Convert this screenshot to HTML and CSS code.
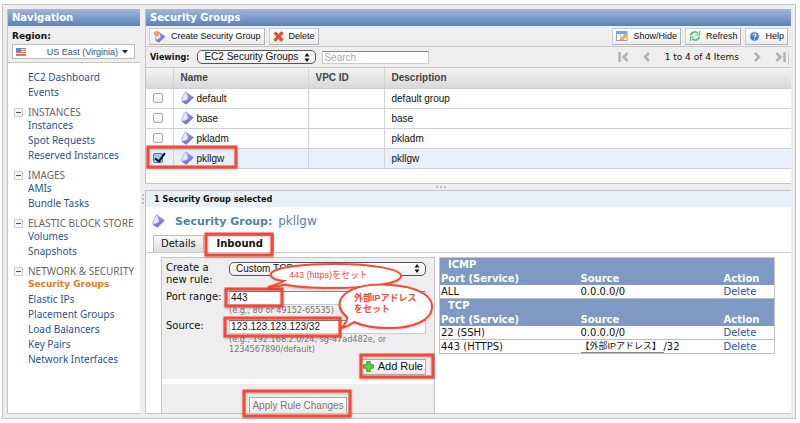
FILE: index.html
```html
<!DOCTYPE html>
<html lang="en">
<head>
<meta charset="utf-8">
<title>Security Groups</title>
<link rel="stylesheet" href="styles.css">
</head>
<body>
<svg class="defs" aria-hidden="true">
  <defs>
    <linearGradient id="gemFill" x1="0" y1="0" x2=".6" y2="1">
      <stop offset="0" stop-color="#b4b7f2"/><stop offset="1" stop-color="#6765da"/>
    </linearGradient>
    <symbol id="gem" viewBox="0 0 13 14">
      <path d="M4.500 .8 C2.500 4 1 6.500 .8 9.500 C1.500 11.500 3.500 13 5.500 13.200 L12.500 6.500 Z" fill="url(#gemFill)" stroke="#908ec4" stroke-width=".6"/>
      <path d="M4.500 1.300 C2.800 4 1.300 6.500 1.100 9.400 C2.500 10.200 5 9.500 7 7.500 C6.500 5 5.800 3 4.500 1.300 Z" fill="#e4e7f8"/>
    </symbol>
  </defs>
</svg>
<div class="app">
  <nav class="sidebar">
    <h2 class="bar">Navigation</h2>
    <div class="region">
      <span class="region-label">Region:</span>
      <button class="region-pick" type="button">
        <svg width="10" height="8" viewBox="0 0 10 8"><path fill="#f7d9d0" d="M0 0h10v8H0z"/><path fill="#ee7057" d="M0 0h10v1H0zM0 2h10v1H0zM0 4h10v1H0zM0 6h10v2H0z"/><path fill="#4a8fd0" d="M0 0h5v4H0z"/></svg>
        <span>US East (Virginia)</span>
        <svg width="6" height="4" viewBox="0 0 6 4"><path d="M0 0h6L3 3.500z" fill="#222"/></svg>
      </button>
    </div>
    <div class="tree">
      <a href="#">EC2 Dashboard</a>
      <a href="#">Events</a>
      <h3><button type="button" aria-label="Collapse"></button>INSTANCES</h3>
      <a href="#">Instances</a>
      <a href="#">Spot Requests</a>
      <a href="#">Reserved Instances</a>
      <h3><button type="button" aria-label="Collapse"></button>IMAGES</h3>
      <a href="#">AMIs</a>
      <a href="#">Bundle Tasks</a>
      <h3><button type="button" aria-label="Collapse"></button>ELASTIC BLOCK STORE</h3>
      <a href="#">Volumes</a>
      <a href="#">Snapshots</a>
      <h3><button type="button" aria-label="Collapse"></button>NETWORK &amp; SECURITY</h3>
      <a href="#" class="current">Security Groups</a>
      <a href="#">Elastic IPs</a>
      <a href="#">Placement Groups</a>
      <a href="#">Load Balancers</a>
      <a href="#">Key Pairs</a>
      <a href="#">Network Interfaces</a>
    </div>
  </nav>
  <div class="vsplit"><i></i><i></i><i></i></div>
  <main class="main">
    <section class="list">
      <h1 class="bar">Security Groups</h1>
      <div class="tools">
        <button class="tool" type="button">
          <svg width="13" height="13" viewBox="0 0 13 13"><use href="#gem" x="1" y="1" width="12" height="12"/><circle cx="3.500" cy="3.500" r="2.500" fill="#f58a3c"/><circle cx="3.500" cy="3.500" r="1" fill="#ffe27a"/></svg>
          Create Security Group
        </button>
        <button class="tool" type="button">
          <svg width="11" height="11" viewBox="0 0 11 11"><path d="M2.500 .8 5.500 3.500 8.500 .6 10.300 2.300 7.500 5.400 10 8.800 8 10.500 5.200 7.600 2.500 10.500 .7 8.700 3.500 5.500 1 2.500z" fill="#ee4a26" stroke="#c93a1a" stroke-width=".5"/></svg>
          Delete
        </button>
        <span class="grow"></span>
        <button class="tool" type="button">
          <svg width="12" height="12" viewBox="0 0 12 12"><rect x=".5" y="1.500" width="10.500" height="9" fill="#fff" stroke="#7fa5d8"/><path d="M1 2h10v2H1z" fill="#75a8e6"/><path d="M4.500 4v6M8 4v6" stroke="#b8cbe6"/><path d="M4 11l.8-3L9 4l2 2-4.200 4z" fill="#f5b23c" stroke="#c98a2a" stroke-width=".5"/></svg>
          Show/Hide
        </button>
        <button class="tool" type="button">
          <svg width="12" height="12" viewBox="0 0 12 12" fill="none" stroke="#5cc084" stroke-width="1.800"><path d="M1.500 5.500C2.500 1.500 7 1 9 3.500M10.500 6.500C9.500 10.500 5 11 3 8.500"/><path d="M10.500 1v4h-4M1.500 11V7h4" stroke-width="1.200"/></svg>
          Refresh
        </button>
        <button class="tool" type="button">
          <svg width="11" height="11" viewBox="0 0 11 11"><circle cx="5.500" cy="5.500" r="5" fill="#b5c6dc"/><circle cx="5.500" cy="5.500" r="4" fill="#3c7dcc"/><path d="M4 4.500C4 2.500 7 2.500 7 4.200 7 5.300 5.500 5.200 5.500 6.500M5.500 7.500v1" fill="none" stroke="#fff" stroke-width="1.100"/></svg>
          Help
        </button>
      </div>
      <div class="filter">
        <label for="view">Viewing:</label>
        <span class="pill"><select id="view"><option>EC2 Security Groups</option></select><svg width="6" height="9" viewBox="0 0 6 9"><path d="M3 0l2.500 3.500h-5zM3 9L.5 5.500h5z" fill="#111"/></svg></span>
        <input class="search" type="text" placeholder="Search" aria-label="Search">
        <span class="grow"></span>
        <div class="pager">
          <button type="button" aria-label="First"><svg width="11" height="10" viewBox="0 0 11 10"><path d="M1.500 0v10M9.500 1L5.500 5l4 4"/></svg></button>
          <button type="button" aria-label="Previous"><svg width="8" height="10" viewBox="0 0 8 10"><path d="M6 1L2 5l4 4"/></svg></button>
          <span>1 to 4 of 4 Items</span>
          <button type="button" aria-label="Next"><svg width="8" height="10" viewBox="0 0 8 10"><path d="M2 1l4 4-4 4"/></svg></button>
          <button type="button" aria-label="Last"><svg width="11" height="10" viewBox="0 0 11 10"><path d="M1.500 1l4 4-4 4M9.500 0v10"/></svg></button>
        </div>
      </div>
      <table class="groups">
        <colgroup><col class="c-check"><col class="c-name"><col class="c-vpc"><col></colgroup>
        <thead><tr><th></th><th>Name</th><th>VPC ID</th><th>Description</th></tr></thead>
        <tbody>
          <tr><td><input type="checkbox" aria-label="default"></td><td><span class="name"><svg width="13" height="14"><use href="#gem"/></svg>default</span></td><td></td><td>default group</td></tr>
          <tr><td><input type="checkbox" aria-label="base"></td><td><span class="name"><svg width="13" height="14"><use href="#gem"/></svg>base</span></td><td></td><td>base</td></tr>
          <tr><td><input type="checkbox" aria-label="pkladm"></td><td><span class="name"><svg width="13" height="14"><use href="#gem"/></svg>pkladm</span></td><td></td><td>pkladm</td></tr>
          <tr class="selected"><td><input type="checkbox" aria-label="pkllgw" checked></td><td><span class="name"><svg width="13" height="14"><use href="#gem"/></svg>pkllgw</span></td><td></td><td>pkllgw</td></tr>
        </tbody>
      </table>
    </section>
    <div class="hsplit"><i></i><i></i><i></i></div>
    <section class="detail">
      <div class="summary">1 Security Group selected</div>
      <h2 class="title"><svg width="13" height="14"><use href="#gem"/></svg><span><b>Security Group:</b> pkllgw</span></h2>
      <div class="tabs">
        <button type="button">Details</button>
        <button type="button" class="active">Inbound</button>
      </div>
      <div class="inbound">
        <form class="rule">
          <div class="fields">
            <label for="kind">Create a<br>new rule:</label>
            <div><span class="pill wide"><select id="kind"><option>Custom TCP rule</option></select><svg width="6" height="9" viewBox="0 0 6 9"><path d="M3 0l2.500 3.500h-5zM3 9L.5 5.500h5z" fill="#111"/></svg></span></div>
            <label for="port">Port range:</label>
            <div><input id="port" type="text" value="443"><p>(e.g., 80 or 49152-65535)</p></div>
            <label for="source">Source:</label>
            <div><input id="source" type="text" value="123.123.123.123/32"><p>(e.g., 192.168.2.0/24, sg-47ad482e, or 1234567890/default)</p></div>
            <button type="button" class="push add"><svg width="11" height="11" viewBox="0 0 11 11"><path d="M3.800 .6h3.400v3.200h3.200v3.400H7.200v3.200H3.800V7.200H.6V3.800h3.200z" fill="#6cd044" stroke="#34962a"/></svg>Add Rule</button>
          </div>
          <div class="apply"><button type="button" class="push" disabled>Apply Rule Changes</button></div>
        </form>
        <div class="rules-wrap">
          <table class="rules">
            <colgroup><col class="r-port"><col><col class="r-action"></colgroup>
            <tbody>
              <tr class="proto"><th colspan="3">ICMP</th></tr>
              <tr class="head"><th>Port (Service)</th><th>Source</th><th>Action</th></tr>
              <tr><td>ALL</td><td>0.0.0.0/0</td><td><a href="#">Delete</a></td></tr>
              <tr class="proto"><th colspan="3">TCP</th></tr>
              <tr class="head"><th>Port (Service)</th><th>Source</th><th>Action</th></tr>
              <tr><td>22 (SSH)</td><td>0.0.0.0/0</td><td><a href="#">Delete</a></td></tr>
              <tr><td>443 (HTTPS)</td><td><span class="masked">【外部IPアドレス】</span>/32</td><td><a href="#">Delete</a></td></tr>
            </tbody>
          </table>
        </div>
      </div>
    </section>
  </main>
</div>
<svg class="notes" width="800" height="423" viewBox="0 0 800 423">
  <g class="frames">
    <rect x="148" y="147" width="88" height="20"/>
    <rect x="206" y="234" width="66" height="21"/>
    <rect x="226" y="289" width="56" height="17"/>
    <rect x="225" y="318" width="115" height="18"/>
    <rect x="361" y="355" width="72" height="22"/>
    <rect x="244" y="391" width="106" height="25"/>
  </g>
  <g class="bubbles">
    <path d="M284 281C274 280 270 277 271 273.500C276 267 304 264 336 264C371 264 401 269 401 276C401 283 371 288 332 288C312 288 296 287 285 284.500C280 286 274 287 268 287C274 285 279 284 284 281Z"/>
    <path d="M347 317C336 308 338 298 348 292C360 284 382 283 400 286C421 289 433 297 432 308C431 321 411 329 386 328C372 328 361 325 354 322C350 325 346 327 342 328C345 324 348 320 347 317Z"/>
  </g>
  <text x="289" y="278">443 (https)をセット</text>
  <text class="strong" x="354" y="301">外部IPアドレス</text>
  <text class="strong" x="354" y="312">をセット</text>
</svg>
</body>
</html>
```

FILE: styles.css
```css
* { box-sizing: border-box; }
html, body { margin: 0; }
body {
  display: flex;
  min-height: 100vh;
  padding: 4px 4px 4px 2px;
  background: #fff;
  color: #111;
  font: 10px/13px "DejaVu Sans", Verdana, sans-serif;
}
h1, h2, h3, p { margin: 0; font-size: inherit; }
button, input, select { margin: 0; font: inherit; color: inherit; }
a { color: #1f5496; text-decoration: none; }
svg { display: block; flex: none; }
.defs { position: absolute; width: 0; height: 0; }
.grow { flex: 1; }

.app {
  display: flex;
  flex: 1;
  min-width: 0;
  padding: 4px;
  border: 1px solid #c4c4c4;
  background: #eee;
}
.bar {
  height: 17px;
  padding: 0 4px;
  background: linear-gradient(#a1b7da, #5c82b6);
  color: #fff;
  font: bold 10px/17px "DejaVu Sans", Verdana, sans-serif;
}

.sidebar {
  display: flex;
  flex-direction: column;
  flex: none;
  width: 133px;
  border: solid #c4c4c4;
  border-width: 0 0 1px 1px;
}
.region {
  padding: 4px 5px 3px 4px;
  border-bottom: 1px solid #c4c4c4;
  background: #eee;
}
.region-label { display: block; font-weight: bold; font-size: 9px; line-height: 12px; }
.region-pick {
  display: flex;
  align-items: center;
  gap: 4px;
  width: 100%;
  height: 15px;
  margin-top: 2px;
  padding: 0 6px 0 3px;
  border: 1px solid #bbb;
  background: #fff;
  color: #1f5496;
  font: 9px/12px "Liberation Sans", Arial, sans-serif;
}
.region-pick span { flex: 1; text-align: right; }
.tree {
  flex: 1;
  padding: 7px 0 0 20px;
  background: #fff;
  font-family: "Noto Sans", Verdana, sans-serif;
  overflow: hidden;
}
.tree a { display: block; line-height: 15px; }
.tree .current { color: #e77818; font: bold 9px/15px "DejaVu Sans", Verdana, sans-serif; }
.tree h3 {
  display: flex;
  align-items: center;
  gap: 5px;
  margin: 6px 0 0 -14px;
  color: #666;
  font-weight: normal;
  line-height: 12px;
  white-space: nowrap;
}
.tree h3 button {
  display: flex;
  align-items: center;
  justify-content: center;
  width: 9px;
  height: 9px;
  padding: 0;
  border: 1px solid #ccc;
  border-radius: 1px;
  background: #f4f4f4;
}
.tree h3 button::before { content: ""; width: 5px; height: 1px; background: #555; }

.vsplit, .hsplit { display: flex; align-items: center; justify-content: center; gap: 2px; }
.vsplit { flex-direction: column; width: 5px; padding-bottom: 25px; }
.hsplit { height: 6px; padding-right: 54px; }
.vsplit i, .hsplit i { width: 2px; height: 2px; background: #bbb; }

.main { display: flex; flex-direction: column; flex: 1; min-width: 0; }
.list, .detail { border: 1px solid #c4c4c4; border-right: 0; background: #fff; }
.list { padding-bottom: 14px; border-top: 0; }
.tools, .filter { display: flex; align-items: center; background: #eee; border-bottom: 1px solid #c8c8c8; }
.tools { gap: 4px; height: 21px; padding: 0 3px; }
.tool {
  display: flex;
  align-items: center;
  gap: 5px;
  height: 17px;
  padding: 0 3px;
  border: 1px solid #ccc;
  border-right-color: #b4b4b4;
  border-bottom-color: #b4b4b4;
  background: linear-gradient(#fff, #ececec);
  font: 9px/13px "Liberation Sans", Arial, sans-serif;
}
.filter { height: 21px; padding: 0 2px 0 4px; }
.filter label { font: bold 9px/13px "DejaVu Sans Condensed", "DejaVu Sans", sans-serif; }
.pill {
  display: flex;
  align-items: center;
  width: 119px;
  height: 14px;
  margin: 0 6px 0 8px;
  padding: 0 5px 0 6px;
  border: 1px solid #555;
  border-radius: 5px;
  background: linear-gradient(#fff, #eee);
  font: 10px/12px "Liberation Sans", Arial, sans-serif;
}
.pill select {
  flex: 1;
  min-width: 0;
  padding: 0;
  border: 0;
  outline: 0;
  background: none;
  appearance: none;
}
.pill.wide { width: 197px; margin: 0; }
.search {
  width: 107px;
  height: 13px;
  padding: 0 1px;
  border: 1px solid #ccc;
  border-top: 1px solid #888;
  border-radius: 0;
  background: #fff;
  font: 10px/11px "Liberation Sans", Arial, sans-serif;
}
.search::placeholder { color: #aaa; opacity: 1; }
.pager { display: flex; align-items: center; gap: 14px; padding-right: 2px; border-right: 1px solid #ccc; font-size: 9px; }
.pager button { padding: 0; border: 0; background: none; }
.pager path { fill: none; stroke: #b2b2b2; stroke-width: 2.500px; }

.groups {
  width: 100%;
  border-collapse: collapse;
  table-layout: fixed;
  font: 10px/13px "Liberation Sans", Arial, sans-serif;
}
.c-check { width: 27px; }
.c-name { width: 135px; }
.c-vpc { width: 76px; }
.groups th, .groups td {
  height: 20px;
  padding: 0 7px;
  border-right: 1px solid #d4d4d4;
  border-bottom: 1px solid #d0d0d0;
  text-align: left;
}
.groups th:last-child, .groups td:last-child { border-right: 0; }
.groups th { background: linear-gradient(#f3f3f3, #d8d8d8); color: #444; }
.groups .selected td { background: #e8f0fd; }
.name { display: flex; align-items: center; gap: 3px; }
.groups input {
  display: block;
  width: 10px;
  height: 10px;
  border: 1px solid #aaa;
  border-radius: 2px;
  background: linear-gradient(#fff, #eee);
  appearance: none;
}
.groups input:checked { border-color: #4e7cac; background: #9cc8ee; }
.groups input:checked::after {
  content: "";
  display: block;
  width: 4px;
  height: 9px;
  margin: -3px 0 0 3px;
  border: solid #111;
  border-width: 0 2px 2px 0;
  transform: rotate(35deg);
}

.detail { flex: 1; display: flex; flex-direction: column; }
.summary {
  padding: 2px 8px 1px;
  background: #e8f0fd;
  font: bold 9px/13px "DejaVu Sans Condensed", "DejaVu Sans", sans-serif;
}
.title {
  display: flex;
  align-items: center;
  gap: 10px;
  padding: 6px 6px 5px;
  color: #5580ac;
  font: 12px/16px "DejaVu Sans", Verdana, sans-serif;
}
.title b { margin-right: 2px; font-size: 11px; }
.tabs { display: flex; gap: 2px; padding: 0 7px; border-bottom: 1px solid #ccc; }
.tabs button {
  height: 17px;
  padding: 0 7px;
  border: 1px solid #bbb;
  border-bottom: 0;
  background: linear-gradient(#fafafa, #ddd);
  line-height: 15px;
}
.tabs .active { width: 68px; background: #fff; font-weight: bold; }
.inbound { display: flex; flex: 1; gap: 4px; padding: 4px 16px 0 15px; }
.rule {
  display: flex;
  flex-direction: column;
  width: 274px;
  border: 1px solid #c4c4c4;
  border-bottom: 0;
}
.fields {
  display: grid;
  grid-template-columns: 63px 197px;
  row-gap: 5px;
  align-content: start;
  padding: 4px 0 4px 4px;
  background: #eee;
  line-height: 12px;
}
.fields input {
  display: block;
  width: 100%;
  height: 14px;
  padding: 0 1px;
  border: 1px solid #ccc;
  border-top-color: #888;
  border-radius: 0;
  background: #fff;
  font: 10px/12px "Liberation Sans", Arial, sans-serif;
}
.fields p {
  color: #777;
  font: 9px/10px "DejaVu Sans Condensed", "DejaVu Sans", sans-serif;
}
.push {
  display: flex;
  align-items: center;
  gap: 4px;
  height: 16px;
  padding: 0 2px;
  border: 1px solid #aaa;
  background: linear-gradient(#fff, #e8e8e8);
  font: 11px/13px "Liberation Sans", Arial, sans-serif;
  white-space: nowrap;
}
.add { grid-column: 1 / 3; justify-self: end; }
.apply {
  flex: 1;
  display: flex;
  align-items: end;
  justify-content: center;
  border-top: 5px solid #fff;
  background: #eee;
}
.apply .push { color: #777; border-bottom: 0; font-size: 10px; }

.rules-wrap { flex: 1; min-width: 0; }
.rules { width: 100%; border-collapse: collapse; table-layout: fixed; border: 1px solid #c4c4c4; }
.r-port { width: 140px; }
.r-action { width: 52px; }
.rules td, .rules th { padding: 0 1px; text-align: left; line-height: 13px; }
.rules td { border-bottom: 1px solid #bbb; }
.rules th { background: #7e9ac3; color: #fff; }
.rules .proto th { padding-left: 8px; line-height: 14px; }
.masked {
  display: inline-block;
  width: 83px;
  height: 12px;
  border-bottom: 1px solid #888;
  font: 9px/11px "Liberation Sans", "Noto Sans CJK JP", sans-serif;
  vertical-align: bottom;
}

.notes { position: absolute; top: 0; left: 0; pointer-events: none; }
.frames { fill: none; stroke: #fb4733; stroke-width: 3px; filter: drop-shadow(0 1px 1px #0004); }
.bubbles { fill: #fff; stroke: #fb4733; stroke-width: 2px; filter: drop-shadow(0 1px 1px #0003); }
.notes text { fill: #fb4733; font: 9px "Liberation Sans", "Noto Sans CJK JP", sans-serif; }
.notes .strong { font-weight: bold; }
```
